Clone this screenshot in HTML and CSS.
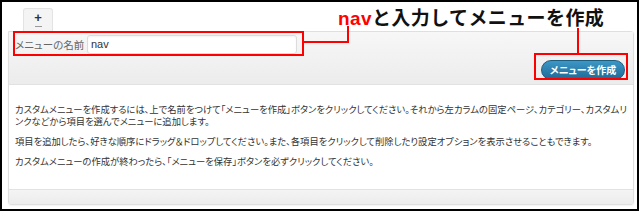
FILE: index.html
```html
<!DOCTYPE html>
<html lang="ja">
<head>
  <meta charset="UTF-8">
  <title>メニューを作成</title>
  <link rel="stylesheet" href="styles.css">
</head>
<body>
<div class="frame">
  <div class="tabs">
    <div class="tab"><span class="plus">+</span><span class="dash"></span></div>
  </div>
  <div class="panel">
    <div class="panel-head">
      <div class="name-row">
        <label class="name-label" for="menu-name">メニューの名前</label>
        <input type="text" id="menu-name" class="name-input" value="nav">
      </div>
      <div class="btn-row">
        <span class="btn-create">メニューを作成</span>
      </div>
    </div>
    <div class="panel-body">
      <p>カスタムメニューを作成するには、上で名前をつけて「メニューを作成」ボタンをクリックしてください。それから左カラムの固定ページ、カテゴリー、カスタムリンクなどから項目を選んでメニューに追加します。</p>
      <p>項目を追加したら、好きな順序にドラッグ＆ドロップしてください。また、各項目をクリックして削除したり設定オプションを表示させることもできます。</p>
      <p>カスタムメニューの作成が終わったら、「メニューを保存」ボタンを必ずクリックしてください。</p>
    </div>
    <div class="panel-foot"></div>
  </div>

  <!-- 注釈 -->
  <div class="note"><span class="note-red">nav</span>と入力してメニューを作成</div>
  <div class="mark mark-name"></div>
  <div class="mark mark-btn"></div>
  <div class="line line-h"></div>
  <div class="line line-v1"></div>
  <div class="line line-v2"></div>
</div>
</body>
</html>
```

FILE: styles.css
```css
body {
  margin: 0;
  background-color: #fff;
  font-family: "Noto Sans CJK JP", "Liberation Sans", sans-serif;
  color: #333;
}

.frame {
  position: relative;
  box-sizing: border-box;
  width: 639px;
  height: 211px;
  border: 2px solid #000;
  padding: 6px 0 0 6px;
  background-color: #fff;
}

.tabs {
  display: flex;
  padding-left: 15px;
}

.tab {
  box-sizing: border-box;
  width: 30px;
  height: 23px;
  border: 1px solid #e3e3e3;
  border-bottom: none;
  border-radius: 3px 3px 0 0;
  background-color: #f4f4f4;
  display: flex;
  flex-direction: column;
  align-items: center;
  padding-top: 3px;
}

.plus {
  font-family: "Liberation Sans", sans-serif;
  font-weight: bold;
  font-size: 13px;
  line-height: 11px;
  color: #333;
}

.dash {
  width: 7px;
  height: 1px;
  margin-top: 3px;
  background-color: #999;
}

.panel {
  box-sizing: border-box;
  width: 626px;
  border: 1px solid #dfdfdf;
  border-radius: 0 3px 3px 3px;
  box-shadow: 0 1px 2px rgba(0, 0, 0, 0.06);
}

.panel-head {
  height: 53px;
  box-sizing: border-box;
  background: linear-gradient(#f7f7f7, #ececec);
  border-bottom: 1px solid #e2e2e2;
  padding: 2px 8px 0 6px;
}

.name-row {
  display: flex;
  align-items: center;
  height: 20px;
}

.name-label {
  width: 72px;
  font-size: 10.5px;
  color: #666;
  font-feature-settings: "palt";
}

.name-input {
  box-sizing: border-box;
  width: 210px;
  height: 19px;
  margin: 0;
  padding: 0 0 0 3px;
  border: 1px solid #dcdcdc;
  border-radius: 3px;
  background-color: #fff;
  box-shadow: inset 0 1px 2px rgba(0, 0, 0, 0.05);
  font-family: "Liberation Sans", sans-serif;
  font-size: 11px;
  color: #333;
}

.btn-row {
  display: flex;
  justify-content: flex-end;
  margin-top: 6px;
}

.btn-create {
  box-sizing: border-box;
  width: 84px;
  height: 20px;
  border: 1px solid #1c5d7e;
  border-radius: 10px;
  background: linear-gradient(#3b97c6, #1f6a95);
  color: #fff;
  font-size: 10px;
  font-weight: bold;
  line-height: 18px;
  text-align: center;
  font-feature-settings: "palt";
}

.panel-body {
  padding: 18px 6px 10px 6px;
  height: 104px;
  box-sizing: border-box;
  background-color: #fff;
}

.panel-body p {
  margin: 0 0 8px;
  font-size: 9.3px;
  line-height: 12px;
  color: #333;
  font-feature-settings: "palt";
}

.panel-foot {
  height: 14px;
  background: linear-gradient(#f4f4f4, #ececec);
  border-top: 1px solid #e2e2e2;
}

.note {
  position: absolute;
  left: 336px;
  top: 3px;
  font-size: 19px;
  font-weight: bold;
  line-height: 24px;
  letter-spacing: 0.4px;
  color: #111;
  white-space: nowrap;
}

.note-red {
  font-family: "Liberation Sans", sans-serif;
  color: #f00;
}

.mark {
  position: absolute;
  box-sizing: border-box;
  border: 2px solid #f00;
}

.mark-name {
  left: 11px;
  top: 29px;
  width: 291px;
  height: 25px;
}

.mark-btn {
  left: 532px;
  top: 51px;
  width: 94px;
  height: 27px;
}

.line {
  position: absolute;
  background-color: #f00;
}

.line-h {
  left: 300px;
  top: 39px;
  width: 47px;
  height: 2px;
}

.line-v1 {
  left: 345px;
  top: 24px;
  width: 2px;
  height: 17px;
}

.line-v2 {
  left: 575px;
  top: 26px;
  width: 2px;
  height: 26px;
}
```
